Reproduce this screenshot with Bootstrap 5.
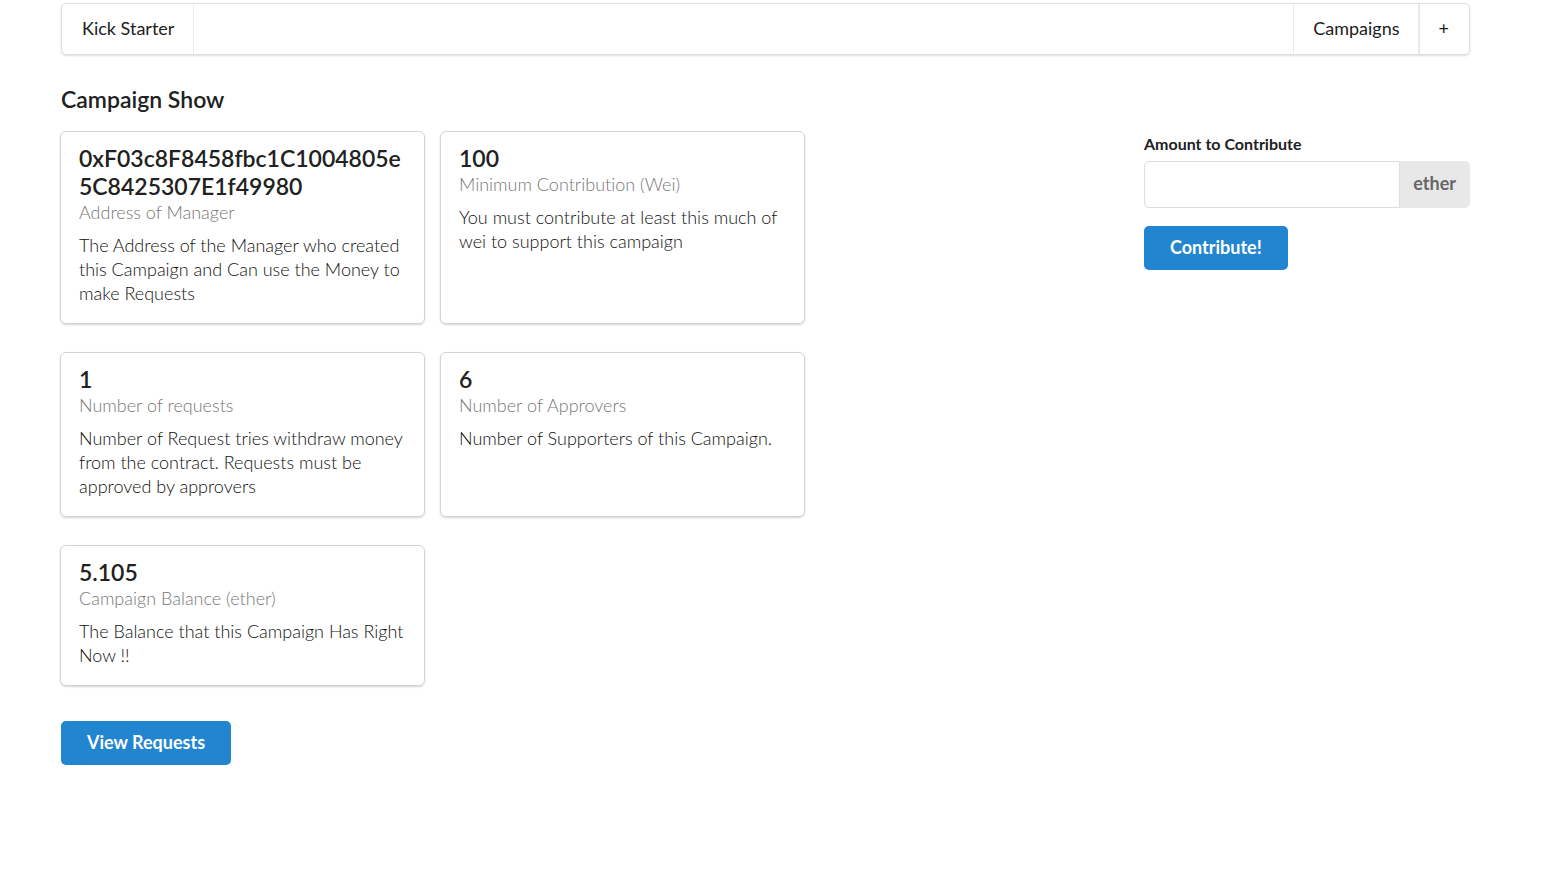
<!DOCTYPE html>
<html lang="en">
<head>
<meta charset="utf-8">
<meta name="viewport" content="width=device-width, initial-scale=1">
<title>Kick Starter</title>
<link href="https://cdn.jsdelivr.net/npm/bootstrap@5.3.0/dist/css/bootstrap.min.css" rel="stylesheet">
<style>
body{font-family:Lato,"Liberation Sans",sans-serif;font-size:18px;line-height:24px;color:#212121;font-variant-ligatures:none}
.page{padding:3px 72px 0 61px}
.menu{border:1px solid #dededf;border-radius:5px;box-shadow:0 1px 2px rgba(34,36,38,.15);min-height:52px}
.menu a{color:#212121;text-decoration:none;display:flex;align-items:center;padding:0 19px 2px}
.menu .brand{padding-left:20px;border-right:1px solid #ececec}
.menu .entry{padding-right:18px;border-left:1px solid #ececec}
.menu .entry + .entry{padding-right:20px;border-left:2px solid #e8e8e8}
h1{font-size:23px;line-height:30px;font-weight:600;margin:29px 0 17px}
.tiles{display:grid;grid-template-columns:repeat(auto-fill,365px);column-gap:15px;row-gap:28px;margin-left:-1px}
.tile{border:1px solid #d4d4d5;border-radius:6px;box-shadow:0 1px 2px #d4d4d5;padding:12px 18px 18px}
.tile h2{font-size:23px;line-height:28px;font-weight:600;margin:0;overflow-wrap:anywhere}
.meta{color:#777;font-weight:300}
.tile p{margin:9px 0 0;color:#111;font-weight:300}
.act{background:#2185d0;color:#fff;font-weight:700;font-size:18px;line-height:24px;border:0;border-radius:5px;padding:9px 26px 11px}
.act:hover{background:#1678c2;color:#fff}
.view{margin-top:35px}
.side{width:326px}
.side label{font-size:16px;font-weight:700;line-height:24px;margin-bottom:5px}
.side .form-control{height:47px;border-color:#dededf;border-radius:5px}
.side .input-group-text{background:#e8e8e8;border:0;color:#666;font-weight:700;font-size:18px;padding:0 14px 2px;border-radius:5px}
.side .act{margin-top:18px}
</style>
</head>
<body>
<div class="container-fluid page">
<nav class="menu d-flex">
<a class="brand" href="#">Kick Starter</a>
<div class="d-flex ms-auto"><a class="entry" href="#">Campaigns</a><a class="entry" href="#">+</a></div>
</nav>
<h1>Campaign Show</h1>
<div class="d-flex justify-content-between">
<main class="col-8">
<div class="tiles">
<article class="tile"><h2>0xF03c8F8458fbc1C1004805e5C8425307E1f49980</h2><div class="meta">Address of Manager</div><p>The Address of the Manager who created this Campaign and Can use the Money to make Requests</p></article>
<article class="tile"><h2>100</h2><div class="meta">Minimum Contribution (Wei)</div><p>You must contribute at least this much of wei to support this campaign</p></article>
<article class="tile"><h2>1</h2><div class="meta">Number of requests</div><p>Number of Request tries withdraw money from the contract. Requests must be approved by approvers</p></article>
<article class="tile"><h2>6</h2><div class="meta">Number of Approvers</div><p>Number of Supporters of this Campaign.</p></article>
<article class="tile"><h2>5.105</h2><div class="meta">Campaign Balance (ether)</div><p>The Balance that this Campaign Has Right Now !!</p></article>
</div>
<button class="btn act view" type="button">View Requests</button>
</main>
<form class="side">
<label for="amount">Amount to Contribute</label>
<div class="input-group"><input id="amount" class="form-control" type="text"><span class="input-group-text">ether</span></div>
<button class="btn act" type="button">Contribute!</button>
</form>
</div>
</div>
<script src="https://cdn.jsdelivr.net/npm/bootstrap@5.3.0/dist/js/bootstrap.bundle.min.js"></script>
</body>
</html>
